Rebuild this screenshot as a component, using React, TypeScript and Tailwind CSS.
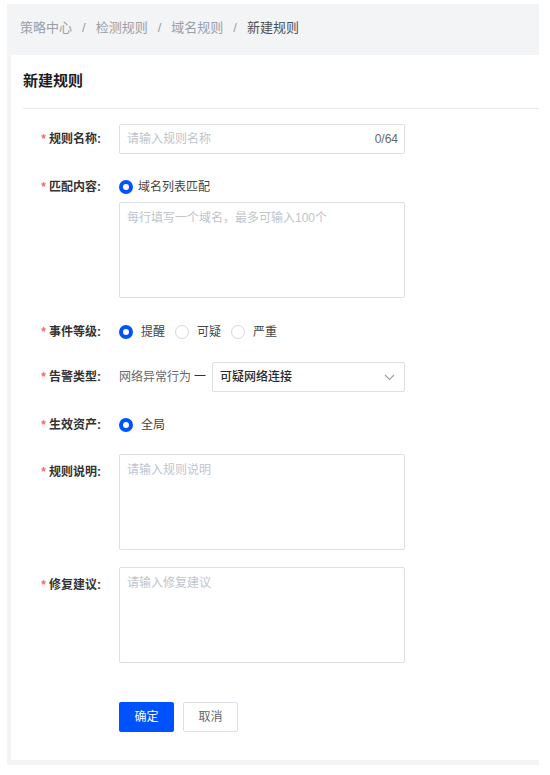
import React from "react";

const FONT = "font-['Liberation_Sans','Noto_Sans_CJK_SC',sans-serif]";

function Label({ text, tall }: { text: string; tall?: boolean }) {
  return (
    <div
      className={`w-[78px] shrink-0 text-right text-[12px] font-semibold text-[#333] ${
        tall ? "pt-[6px] leading-[24px]" : "leading-[24px]"
      }`}
    >
      <span className="mr-[3px] text-[#f56c6c]">*</span>
      <span>{text}:</span>
    </div>
  );
}

function Radio({ checked, label, gap = "ml-[8px]" }: { checked?: boolean; label: string; gap?: string }) {
  return (
    <span className="inline-flex items-center">
      <span
        className={`h-[14px] w-[14px] rounded-full bg-white ${
          checked ? "border-[4px] border-[#0052ff]" : "border border-[#d4d7de]"
        }`}
      />
      <span className={`${gap} text-[12px] text-[#444]`}>{label}</span>
    </span>
  );
}

function TextArea({ placeholder }: { placeholder: string }) {
  return (
    <textarea
      placeholder={placeholder}
      className="block h-[96px] w-[286px] resize-none rounded-[2px] border border-[#dcdfe6] px-[7px] py-[6px] text-[12px] leading-[18px] text-[#333] outline-none placeholder:text-[#c0c4cc]"
    />
  );
}

export default function App() {
  const crumbs = ["策略中心", "检测规则", "域名规则"];
  return (
    <div className={`h-[775px] w-[550px] bg-white pl-[7px] pt-[4px] ${FONT}`}>
      <div className="flex h-[761px] w-[532px] flex-col bg-[#f3f4f6] pb-[5px]">
        <nav className="flex h-[51px] items-center pb-[3px] pl-[13px] text-[13px]">
          {crumbs.map((c) => (
            <React.Fragment key={c}>
              <span className="text-[#9a9ea6]">{c}</span>
              <span className="mx-[10px] text-[#9a9ea6]">/</span>
            </React.Fragment>
          ))}
          <span className="text-[#4b5058]">新建规则</span>
        </nav>

        <div className="ml-[4px] flex-1 bg-white">
          <div className="ml-[12px] flex h-[54px] items-center border-b border-[#e8e9eb]">
            <h1 className="text-[15px] font-bold text-[#1d1d1f]">新建规则</h1>
          </div>

          <div className="pl-[12px]">
            {/* 规则名称 */}
            <div className="mt-[15px] flex items-center">
              <Label text="规则名称" />
              <div className="ml-[18px] flex h-[30px] w-[286px] items-center rounded-[2px] border border-[#dcdfe6] pl-[7px] pr-[6px]">
                <input
                  placeholder="请输入规则名称"
                  className="flex-1 bg-transparent text-[12px] text-[#333] outline-none placeholder:text-[#c0c4cc]"
                />
                <span className="text-[12px] text-[#666]">0/64</span>
              </div>
            </div>

            {/* 匹配内容 */}
            <div className="mt-[21px] flex">
              <Label text="匹配内容" />
              <div className="ml-[18px]">
                <div className="flex h-[24px] items-center">
                  <Radio checked label="域名列表匹配" gap="ml-[5px]" />
                </div>
                <div className="mt-[3px]">
                  <TextArea placeholder="每行填写一个域名，最多可输入100个" />
                </div>
              </div>
            </div>

            {/* 事件等级 */}
            <div className="mt-[22px] flex items-center">
              <Label text="事件等级" />
              <div className="ml-[18px] flex h-[24px] items-center gap-[10px]">
                <Radio checked label="提醒" />
                <Radio label="可疑" />
                <Radio label="严重" />
              </div>
            </div>

            {/* 告警类型 */}
            <div className="mt-[18px] flex items-center">
              <Label text="告警类型" />
              <div className="ml-[18px] flex items-center">
                <span className="text-[12px] text-[#666]">网络异常行为</span>
                <span className="ml-[3px] mr-[6px] text-[12px] text-[#333]">一</span>
                <div className="flex h-[30px] w-[193px] items-center justify-between rounded-[2px] border border-[#dcdfe6] pl-[7px] pr-[9px]">
                  <span className="text-[12px] font-medium text-[#2b2b2b]">可疑网络连接</span>
                  <svg width="11" height="7" viewBox="0 0 11 7" fill="none">
                    <polyline points="1,1 5.5,5.5 10,1" stroke="#9aa0a8" strokeWidth="1.1" />
                  </svg>
                </div>
              </div>
            </div>

            {/* 生效资产 */}
            <div className="mt-[21px] flex items-center">
              <Label text="生效资产" />
              <div className="ml-[18px] flex h-[24px] items-center">
                <Radio checked label="全局" />
              </div>
            </div>

            {/* 规则说明 */}
            <div className="mt-[17px] flex">
              <Label text="规则说明" tall />
              <div className="ml-[18px]">
                <TextArea placeholder="请输入规则说明" />
              </div>
            </div>

            {/* 修复建议 */}
            <div className="mt-[17px] flex">
              <Label text="修复建议" tall />
              <div className="ml-[18px]">
                <TextArea placeholder="请输入修复建议" />
              </div>
            </div>

            <div className="ml-[96px] mt-[39px] flex gap-[9px]">
              <button className="h-[30px] w-[55px] rounded-[2px] bg-[#0052ff] text-[12px] text-white">确定</button>
              <button className="h-[30px] w-[55px] rounded-[2px] border border-[#dcdfe6] bg-white text-[12px] text-[#666]">
                取消
              </button>
            </div>
          </div>
        </div>
      </div>
    </div>
  );
}
